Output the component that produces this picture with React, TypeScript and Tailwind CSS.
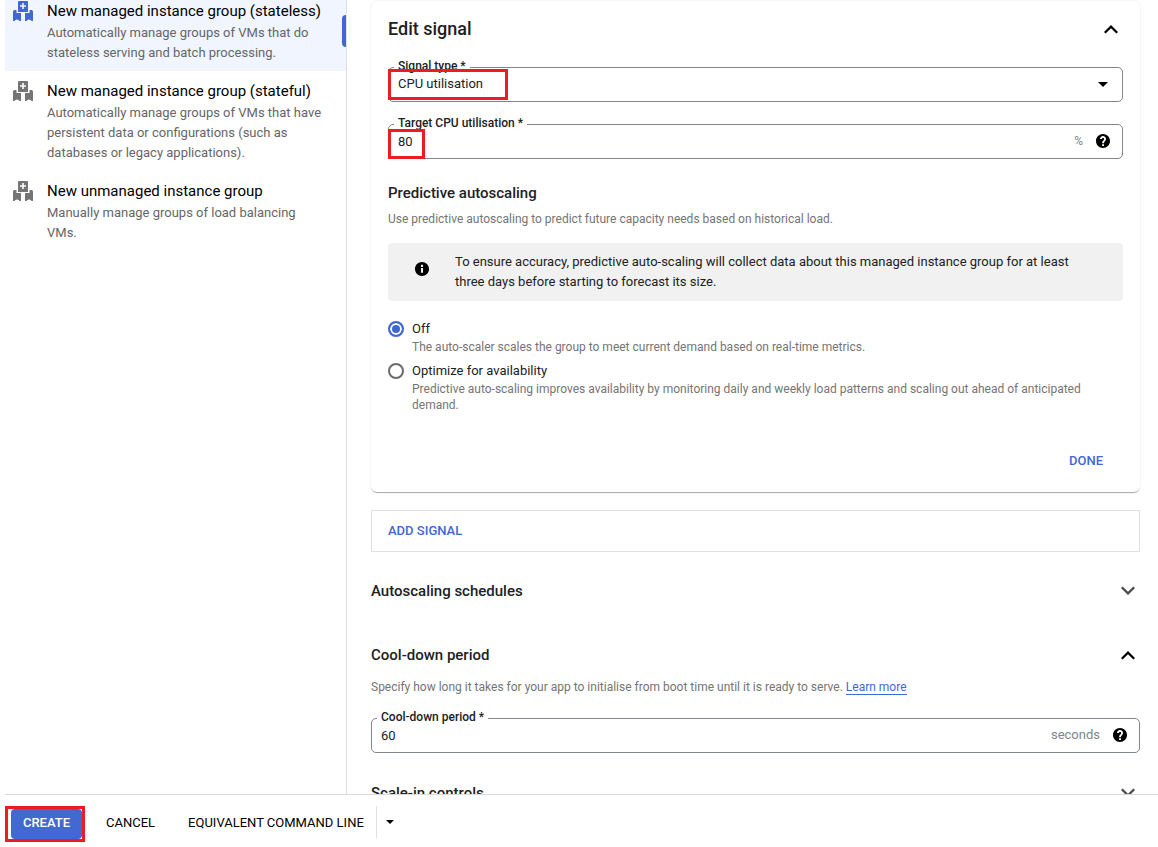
import { useId, useState, type ReactNode } from "react";

const groups = [
  {
    title: "New managed instance group (stateless)",
    text: "Automatically manage groups of VMs that do stateless serving and batch processing.",
    selected: true,
  },
  {
    title: "New managed instance group (stateful)",
    text: "Automatically manage groups of VMs that have persistent data or configurations (such as databases or legacy applications).",
    selected: false,
  },
  {
    title: "New unmanaged instance group",
    text: "Manually manage groups of load balancing VMs.",
    selected: false,
  },
];

function GroupIcon() {
  return (
    <svg viewBox="0 0 20 20" className="size-5 shrink-0" fill="currentColor" aria-hidden="true">
      <path
        fillRule="evenodd"
        d="M6 0h8a1 1 0 0 1 1 1v10H5V1a1 1 0 0 1 1-1zm3.200 2v2.200H7v1.600h2.200V8h1.600V5.800H13V4.200h-2.200V2z"
      />
      <path d="M0 10.500Q0 9 1.500 9H3.500V12H8V20H6.500Q6 18.500 4 18.500T1.500 20H0z" />
      <path d="M20 10.500Q20 9 18.500 9H16.500V12H12V20H13.500Q14 18.500 16 18.500T18.500 20H20z" />
    </svg>
  );
}

function Chevron({ up = false }: { up?: boolean }) {
  return (
    <svg
      viewBox="0 0 24 24"
      className={up ? "size-6 text-black" : "size-6 rotate-180 text-[#4a4a4a]"}
      fill="currentColor"
      aria-hidden="true"
    >
      <path d="M12 8l-7 7 1.600 1.600L12 11.200l5.400 5.400L19 15z" />
    </svg>
  );
}

function HelpIcon() {
  return (
    <svg viewBox="2 2 20 20" className="size-3.5" fill="#000" aria-hidden="true">
      <path d="M12 2C6.480 2 2 6.480 2 12s4.480 10 10 10 10-4.480 10-10S17.520 2 12 2zm1.400 17.200h-2.700v-2.700h2.700v2.700zm1.900-7.400l-.9.900c-.7.700-1 1.300-1 2.500h-2.700v-.5c0-1.100.5-2.100 1.200-2.800l1.200-1.300c.4-.3.600-.8.600-1.300 0-1-.7-1.700-1.700-1.700s-1.700.7-1.700 1.700H7.700c0-2.300 1.900-4.300 4.300-4.300s4.300 2 4.300 4.300c0 1-.4 1.800-1 2.500z" />
    </svg>
  );
}

function InfoIcon() {
  return (
    <svg viewBox="2 2 20 20" className="mt-2.5 size-3.5 shrink-0" fill="#000" aria-hidden="true">
      <path d="M12 2C6.480 2 2 6.480 2 12s4.480 10 10 10 10-4.480 10-10S17.520 2 12 2zm1.500 15.500h-3v-7h3v7zm0-8.500h-3V6h3v3z" />
    </svg>
  );
}

function Caret({ small = false }: { small?: boolean }) {
  return (
    <svg viewBox="0 0 10 5" className={small ? "h-1 w-2" : "h-[5px] w-2.5"} fill="#000" aria-hidden="true">
      <path d="M0 0h10L5 5z" />
    </svg>
  );
}

function Field({ id, label, children }: { id: string; label: string; children: ReactNode }) {
  return (
    <fieldset className="flex h-[43px] min-w-0 items-start rounded-[5px] border border-[#80868b] pr-3 pl-[9px]">
      <legend className="-ml-1 h-4 px-1 text-xs leading-[14px] font-medium">
        <label htmlFor={id}>{label}</label>
      </legend>
      {children}
    </fieldset>
  );
}

function NumberField({ label, unit, initial, wide }: { label: string; unit: string; initial: string; wide?: boolean }) {
  const id = useId();
  const [value, setValue] = useState(initial);
  return (
    <Field id={id} label={label}>
      <div className="-mt-px flex h-5 w-full items-center">
        <input
          id={id}
          value={value}
          inputMode="numeric"
          onChange={(e) => setValue(e.target.value)}
          className="h-5 min-w-0 flex-1 bg-transparent text-[13px] outline-none"
        />
        <span className={wide ? "text-[13px] text-[#80868b]" : "text-xs text-[#80868b]"}>{unit}</span>
        <button type="button" aria-label={`Help for ${label}`} className="ml-[13px]">
          <HelpIcon />
        </button>
      </div>
    </Field>
  );
}

function RadioRow({ value, label, text, checked, onSelect }: { value: string; label: string; text: string; checked: boolean; onSelect: (v: string) => void }) {
  return (
    <label className="flex gap-2">
      <input
        type="radio"
        name="predictive"
        value={value}
        checked={checked}
        onChange={() => onSelect(value)}
        className="mt-0.5 size-4 shrink-0 appearance-none rounded-full border-2 border-[#6b6b6b] checked:border-[#3f68d4] checked:bg-[#3f68d4] checked:shadow-[inset_0_0_0_2px_#fff]"
      />
      <span>
        <span className="block text-[13px] leading-5">{label}</span>
        <span className="block text-xs leading-4 text-[#757575]">{text}</span>
      </span>
    </label>
  );
}

export default function App() {
  const signalId = useId();
  const [mode, setMode] = useState("off");
  return (
    <div className="flex h-screen flex-col overflow-hidden bg-white font-[Roboto,sans-serif] text-[13px] text-[#202124]">
      <div className="ml-[5px] flex min-h-0 flex-1 overflow-hidden">
        <nav aria-label="Instance group type" className="w-[342px] shrink-0 border-r border-[#e0e0e0]">
          {groups.map((g) => (
            <a
              key={g.title}
              href="#"
              aria-current={g.selected ? "page" : undefined}
              className={
                g.selected
                  ? "relative flex gap-3.5 bg-[#f0f5ff] pt-px pr-6 pb-2 pl-2 text-[#3f68d4]"
                  : "flex gap-3.5 pt-2.5 pr-6 pb-2 pl-2 text-[#757575]"
              }
            >
              <GroupIcon />
              <span className="min-w-0">
                <span className="block text-[15px] leading-5 text-black">{g.title}</span>
                <span className="mt-0.5 block text-[13px] leading-5 text-[#666]">{g.text}</span>
              </span>
              {g.selected && <span className="absolute top-[15px] right-0 h-8 w-1 rounded-l bg-[#3f68d4]" />}
            </a>
          ))}
        </nav>

        <main className="min-w-0 flex-1 pt-px pr-[18px] pl-6">
          <section className="rounded-md bg-white px-[17px] pt-4 pb-[15px] shadow-[0_2px_1px_-1px_rgba(0,0,0,0.25),0_1px_1px_rgba(0,0,0,0.1),0_0_2px_rgba(0,0,0,0.1)]">
            <div className="flex items-center justify-between">
              <h2 className="text-lg leading-6 font-medium">Edit signal</h2>
              <button type="button" aria-label="Collapse signal">
                <Chevron up />
              </button>
            </div>
            <div className="mt-[18px] flex flex-col gap-3.5">
              <Field id={signalId} label="Signal type *">
                <div className="relative -mt-px flex h-5 w-full items-center">
                  <select id={signalId} className="h-5 w-full appearance-none bg-transparent text-[13px] outline-none">
                    <option>CPU utilisation</option>
                  </select>
                  <span className="pointer-events-none absolute right-0.5">
                    <Caret />
                  </span>
                  <span className="pointer-events-none absolute -top-[5px] -left-2.5 h-[31px] w-[120px] border-3 border-[#ed1c24]" />
                </div>
              </Field>
              <div className="relative">
                <NumberField label="Target CPU utilisation *" unit="%" initial="80" />
                <span className="pointer-events-none absolute top-[13px] left-0 h-[30px] w-[37px] border-3 border-[#ed1c24]" />
              </div>
            </div>

            <h3 className="mt-6 text-[15px] leading-5 font-medium">Predictive autoscaling</h3>
            <p className="mt-2 text-xs leading-4 text-[#757575]">
              Use predictive autoscaling to predict future capacity needs based on historical load.
            </p>
            <div className="mt-4 flex items-start gap-[26px] rounded bg-[#f1f1f1] py-[9px] pr-8 pl-[27px]">
              <InfoIcon />
              <p className="text-[13px] leading-5">
                To ensure accuracy, predictive auto-scaling will collect data about this managed instance group for at
                least three days before starting to forecast its size.
              </p>
            </div>
            <div role="radiogroup" aria-label="Predictive autoscaling" className="mt-[18px] flex flex-col gap-1.5">
              <RadioRow
                value="off"
                label="Off"
                text="The auto-scaler scales the group to meet current demand based on real-time metrics."
                checked={mode === "off"}
                onSelect={setMode}
              />
              <RadioRow
                value="availability"
                label="Optimize for availability"
                text="Predictive auto-scaling improves availability by monitoring daily and weekly load patterns and scaling out ahead of anticipated demand."
                checked={mode === "availability"}
                onSelect={setMode}
              />
            </div>
            <div className="mt-8 flex justify-end pr-5">
              <button type="button" className="h-8 text-[13px] font-medium text-[#3f68d4]">
                DONE
              </button>
            </div>
          </section>

          <button
            type="button"
            className="mt-[18px] flex h-[42px] w-full items-center border border-[#e0e0e0] px-4 text-[13px] font-medium text-[#3f68d4]"
          >
            ADD SIGNAL
          </button>

          <div className="mt-[27px] flex items-center justify-between">
            <h3 className="text-[15px] leading-6 font-medium">Autoscaling schedules</h3>
            <button type="button" aria-label="Expand autoscaling schedules">
              <Chevron />
            </button>
          </div>

          <div className="mt-10 flex items-center justify-between">
            <h3 className="text-[15px] leading-6 font-medium">Cool-down period</h3>
            <button type="button" aria-label="Collapse cool-down period">
              <Chevron up />
            </button>
          </div>
          <p className="mt-3 mb-[15px] text-xs leading-4 text-[#757575]">
            Specify how long it takes for your app to initialise from boot time until it is ready to serve.{" "}
            <a href="#" className="border-b border-[#3f68d4] text-[#3f68d4]">
              Learn more
            </a>
          </p>
          <NumberField label="Cool-down period *" unit="seconds" initial="60" wide />

          <div className="mt-7 flex items-center justify-between">
            <h3 className="text-[15px] leading-6 font-medium">Scale-in controls</h3>
            <button type="button" aria-label="Expand scale-in controls">
              <Chevron />
            </button>
          </div>
        </main>
      </div>

      <footer className="ml-[5px] flex h-[53px] shrink-0 items-start border-t border-[#dadada] bg-white pt-[11px] text-[13px] text-black">
        <div className="h-9 w-20 border-3 border-[#ed1c24] pl-[3px]">
          <button type="button" className="h-full w-full rounded bg-[#4169d1] pb-[3px] font-medium text-white">
            CREATE
          </button>
        </div>
        <button type="button" className="ml-[21px] h-[34px]">
          CANCEL
        </button>
        <button type="button" className="ml-[33px] h-[34px]">
          EQUIVALENT COMMAND LINE
        </button>
        <button
          type="button"
          aria-label="More options"
          className="ml-3 flex h-8 items-center border-l border-[#e0e0e0] pl-[9px]"
        >
          <Caret small />
        </button>
      </footer>
    </div>
  );
}
